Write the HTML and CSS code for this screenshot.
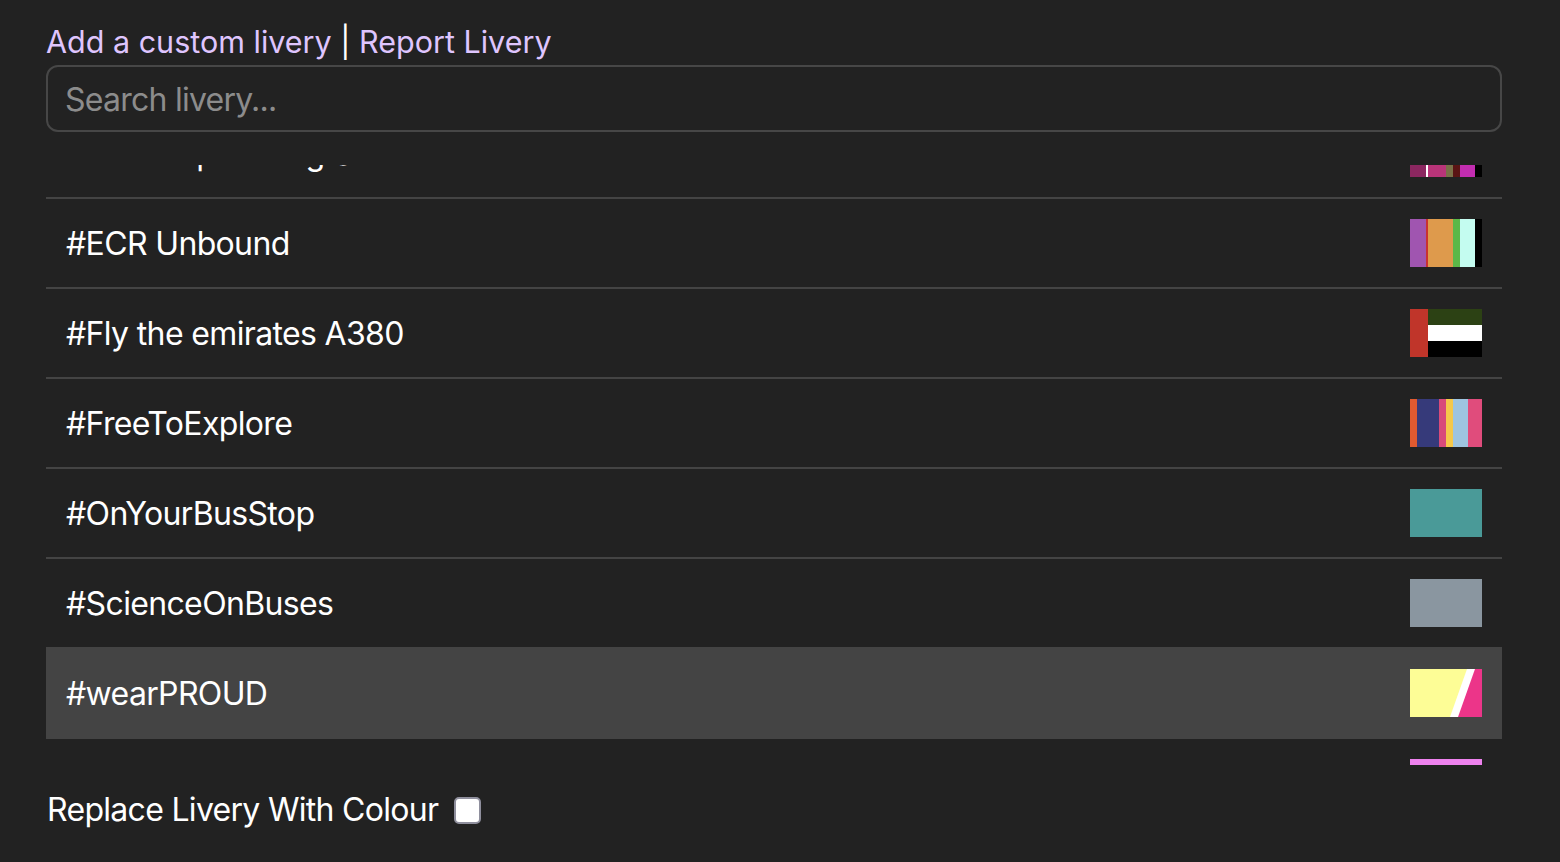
FILE: index.html
```html
<!DOCTYPE html>
<html lang="en">
<head>
<meta charset="utf-8">
<title>Livery picker</title>
<link rel="stylesheet" href="styles.css">
</head>
<body>
<div class="panel">
  <div class="links">
    <a class="link" href="#">Add a custom livery</a> <span class="sep">|</span> <a class="link" href="#">Report Livery</a>
  </div>
  <input class="search" type="text" placeholder="Search livery...">
  <div class="list">
    <div class="list-inner">
      <div class="row">
        <span class="name">#Cool Explore Big Smiles Out</span>
        <span class="swatch">
          <i style="width:16px;background:#8b2760"></i><i style="width:2px;background:#ffffff"></i><i style="width:18px;background:#b93479"></i><i style="width:7px;background:#7a7048"></i><i style="width:7px;background:#5a1414"></i><i style="width:15px;background:#c22db0"></i><i style="width:7px;background:#000000"></i>
        </span>
      </div>
      <div class="row">
        <span class="name">#ECR Unbound</span>
        <span class="swatch">
          <i style="width:16px;background:#a055b0"></i><i style="width:2px;background:#c83232"></i><i style="width:25px;background:#de9a4c"></i><i style="width:7px;background:#5cb848"></i><i style="width:15px;background:#c4fcf0"></i><i style="width:7px;background:#000000"></i>
        </span>
      </div>
      <div class="row">
        <span class="name">#Fly the emirates A380</span>
        <span class="swatch flag">
          <i class="flag-red"></i>
          <span class="flag-stripes"><i style="background:#2c4114"></i><i style="background:#ffffff"></i><i style="background:#000000"></i></span>
        </span>
      </div>
      <div class="row">
        <span class="name">#FreeToExplore</span>
        <span class="swatch">
          <i style="width:7px;background:#e05a30"></i><i style="width:22px;background:#363a7a"></i><i style="width:7px;background:#d84a7a"></i><i style="width:7px;background:#f5c84a"></i><i style="width:15px;background:#9ec4e0"></i><i style="width:14px;background:#e04c7c"></i>
        </span>
      </div>
      <div class="row">
        <span class="name">#OnYourBusStop</span>
        <span class="swatch" style="background:#4a9a98"></span>
      </div>
      <div class="row">
        <span class="name">#ScienceOnBuses</span>
        <span class="swatch" style="background:#8a96a0"></span>
      </div>
      <div class="row active">
        <span class="name">#wearPROUD</span>
        <span class="swatch">
          <svg width="72" height="48" viewBox="0 0 72 48">
            <rect width="72" height="48" fill="#fdfd96"/>
            <polygon points="57,0 72,0 72,48 40,48" fill="#ffffff"/>
            <polygon points="65,0 72,0 72,48 48,48" fill="#ec3589"/>
          </svg>
        </span>
      </div>
      <div class="row">
        <span class="name">#Pride</span>
        <span class="swatch" style="background:#ee82ee"></span>
      </div>
    </div>
  </div>
  <label class="option">Replace Livery With Colour <input class="check" type="checkbox"></label>
</div>
</body>
</html>
```

FILE: styles.css
```css
html, body {
  margin: 0;
  padding: 0;
  background: #222222;
  height: 100%;
}
body {
  font-family: Inter, "Noto Sans", "Liberation Sans", sans-serif;
  color: #ffffff;
}
.panel {
  width: 1456px;
  margin-left: 46px;
  padding-top: 22px;
  display: flex;
  flex-direction: column;
}
.links {
  font-size: 30.5px;
  line-height: 40px;
  height: 43px;
}
.link {
  color: #dfc5fe;
  text-decoration: none;
}
.sep {
  color: #ffffff;
}
.search {
  box-sizing: border-box;
  height: 67px;
  width: 100%;
  margin: 0;
  border: 2px solid #474747;
  border-radius: 12px;
  background: #222222;
  color: #ffffff;
  font-family: inherit;
  font-size: 32px;
  letter-spacing: -0.75px;
  padding: 2px 17px 0 17px;
  outline: none;
}
.search::placeholder {
  color: #8c8c8c;
}
.list {
  margin-top: 33px;
  height: 600px;
  overflow: hidden;
}
.list-inner {
  margin-top: -56px;
}
.row {
  display: flex;
  align-items: center;
  justify-content: space-between;
  padding: 20px;
  border-bottom: 2px solid #444444;
}
.row.active {
  background: #444444;
}
.name {
  font-size: 32px;
  line-height: 40px;
  letter-spacing: -0.65px;
  padding-top: 1px;
}
.swatch {
  width: 72px;
  height: 48px;
  display: flex;
  flex: none;
}
.swatch i {
  display: block;
  height: 48px;
}
.swatch svg {
  display: block;
}
.flag-red {
  width: 18px;
  background: #c0352a;
}
.flag-stripes {
  display: flex;
  flex-direction: column;
  flex: 1;
}
.flag-stripes i {
  height: 16px;
}
.option {
  margin-top: 25px;
  display: flex;
  align-items: center;
  font-size: 32px;
  line-height: 40px;
  letter-spacing: -0.7px;
  padding-left: 1px;
}
.check {
  appearance: none;
  -webkit-appearance: none;
  width: 27px;
  height: 27px;
  margin: 0 0 0 16px;
  box-sizing: border-box;
  background: #ffffff;
  border: 2px solid #8f8f9d;
  border-radius: 5px;
}
```
